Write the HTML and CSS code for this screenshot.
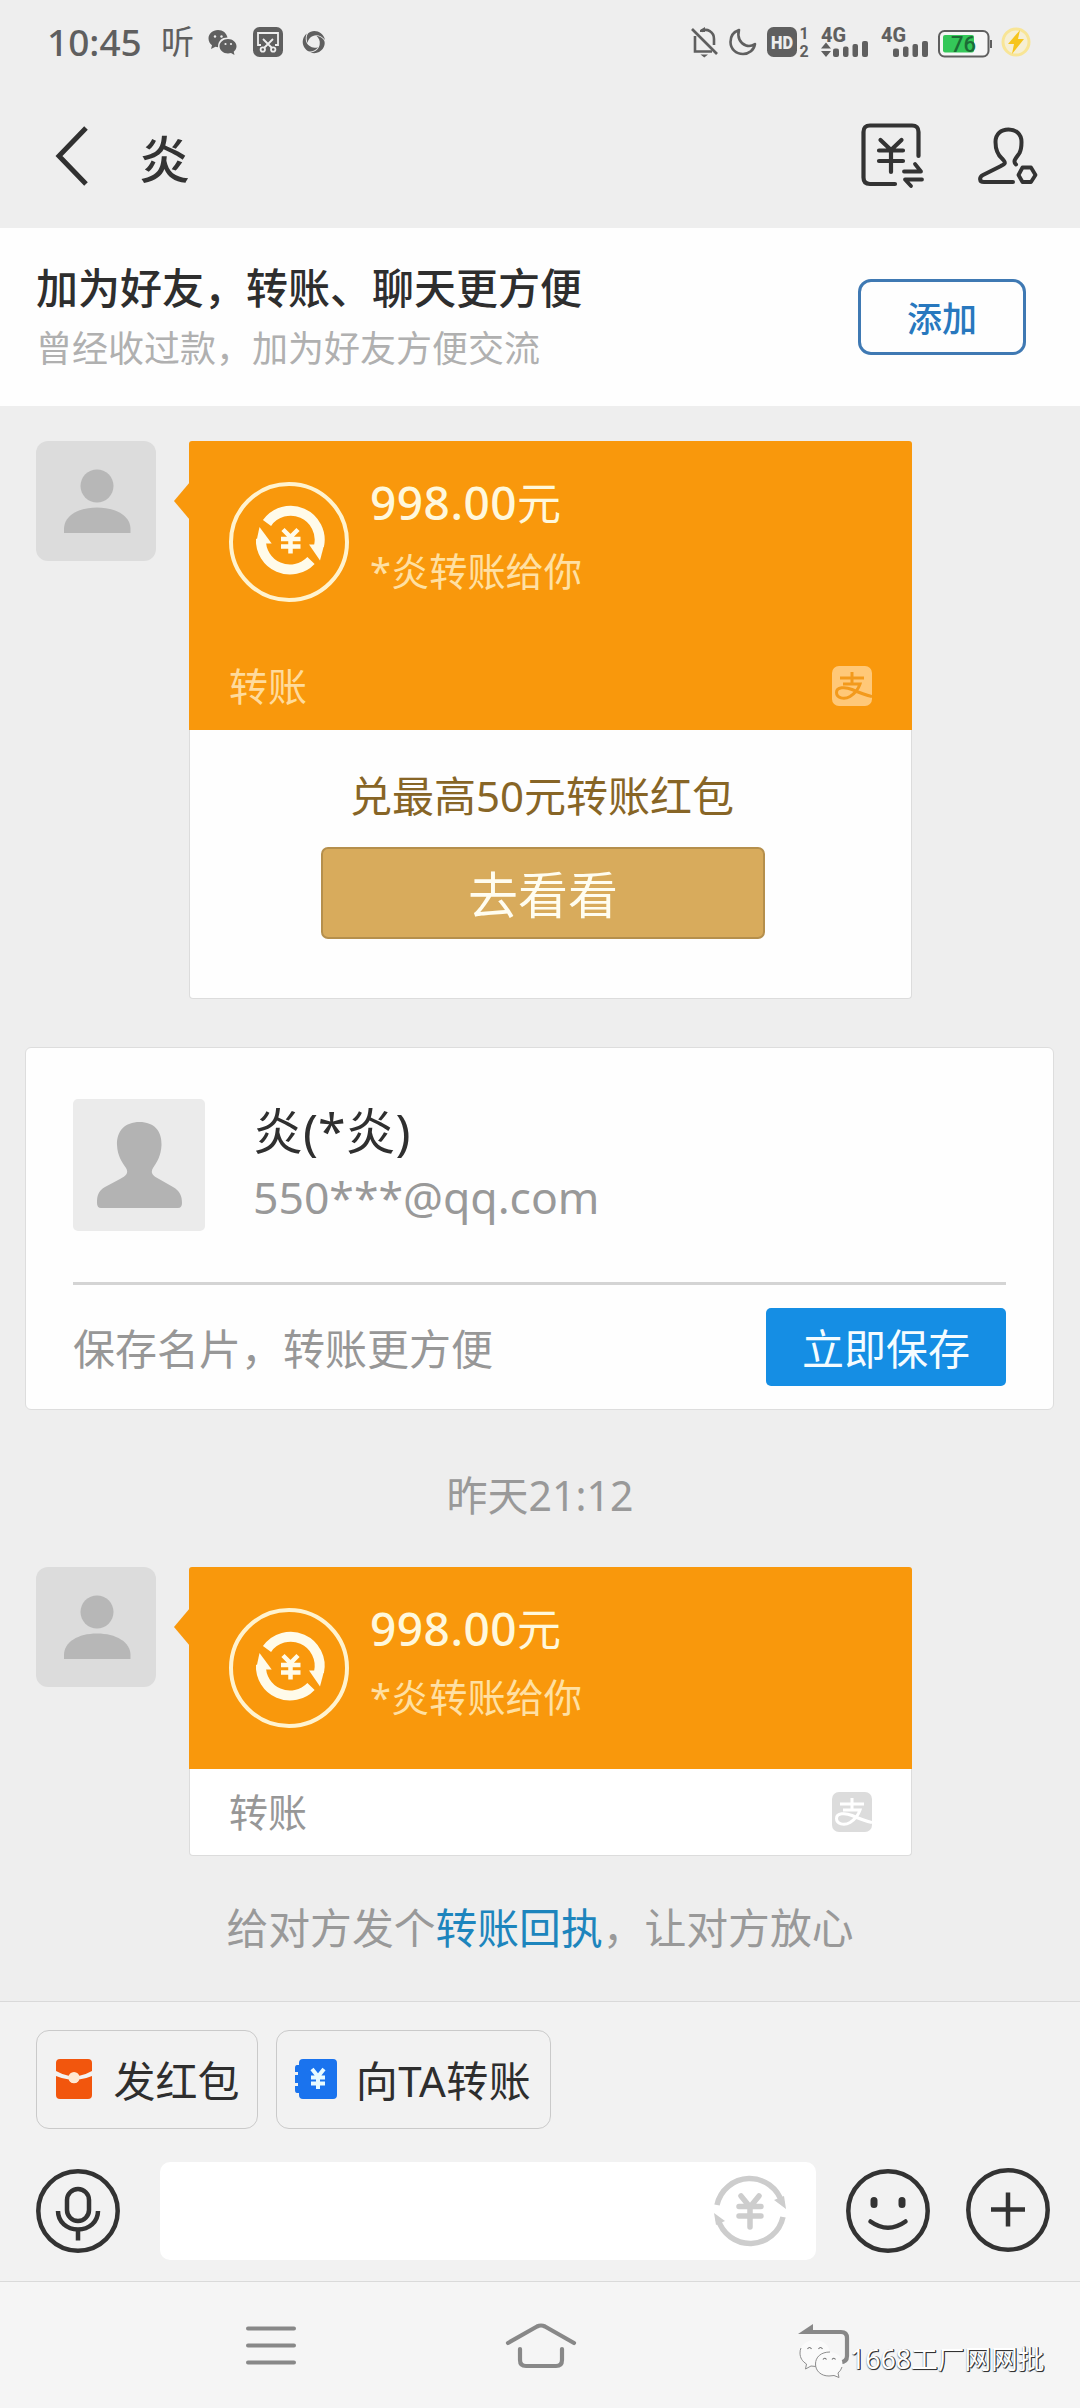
FILE: index.html
```html
<!DOCTYPE html>
<html lang="zh-CN">
<head>
<meta charset="utf-8">
<title>炎</title>
<link rel="stylesheet" href="styles.css">
</head>
<body>
<svg class="defs" width="0" height="0">
  <defs>
    <symbol id="person" viewBox="0 0 120 120">
      <circle cx="61" cy="45" r="16.5"/>
      <path d="M28 92V88C28 75 42 66.500 61 66.500S94.500 75 94.500 88V92Z"/>
    </symbol>
    <symbol id="transfer" viewBox="0 0 120 120">
      <circle cx="60" cy="60" r="58" fill="none" stroke="#fff3cf" stroke-width="4"/>
      <g fill="none" stroke="#fffbea" stroke-width="10">
        <path d="M38 41A29 29 0 0 1 90 64"/>
        <path d="M82 78.500A29 29 0 0 1 32 57"/>
      </g>
      <g fill="#fffbea">
        <path d="M80 62.500H95.200L91 78.500Z"/>
        <path d="M42.700 61.500H27L30.500 45Z"/>
      </g>
      <path d="M54 47.500L61.500 55L69 47.500M61.500 54V71.500M52 57H71.500M52 64.500H71.500" fill="none" stroke="#fffbea" stroke-width="4.500"/>
    </symbol>
    <symbol id="pay" viewBox="0 0 40 40">
      <path d="M8 12H32M20 6V18M11 18H28C26 24 22 28 18 30.500C12 34 4.500 32 4.500 26.500C4.500 21 13 20.500 20 23.500C28 27 33 29 40 30.500" fill="none" stroke-width="3"/>
    </symbol>
  </defs>
</svg>
<main class="phone">
  <div class="status">
    <span class="clock">10:45</span>
    <span class="ting">听</span>
    <svg class="s-wechat" width="29" height="26" viewBox="0 0 29 26">
      <path fill="#5f5f5f" d="M10 0C4.500 0 .5 3.700.5 8.500C.5 11.500 2 13.700 4 15.200L3 19L7.500 16.800L10 17.200C10 10.500 14 7.500 19.500 7.500C18.500 3 15 0 10 0Z"/>
      <path fill="#5f5f5f" d="M20 9C15.300 9 11.500 12.300 11.500 16.300S15.300 23.500 20 23.500L23 23L26.500 25L25.700 21.700C27.500 20.500 28.500 18.500 28.500 16.300C28.500 12.300 24.700 9 20 9Z"/>
      <g fill="#eee"><circle cx="7" cy="6.500" r="1.200"/><circle cx="13.500" cy="6.500" r="1.200"/><circle cx="17.500" cy="14" r="1.100"/><circle cx="23" cy="14" r="1.100"/></g>
    </svg>
    <svg class="s-cut" width="30" height="30" viewBox="0 0 30 30">
      <rect width="30" height="30" rx="6.500" fill="#5f5f5f"/>
      <g fill="none" stroke="#eee" stroke-width="1.800"><path d="M8 18H5V6H25V18H22"/><path d="M10 12L19 21M20 12L11 21"/><circle cx="9.800" cy="22.500" r="2.200"/><circle cx="20.200" cy="22.500" r="2.200"/></g>
    </svg>
    <svg class="s-swirl" width="24" height="24" viewBox="-12 -12 24 24">
      <g fill="#5f5f5f"><path id="blade" d="M-6 -8.500C-2 -13 9 -12 11 -2C8 -6 3 -8 -1 -6C-4 -5 -6 -2 -6.500 1C-8 -3 -7.500 -6.500 -6 -8.500Z"/><use href="#blade" transform="rotate(120)"/><use href="#blade" transform="rotate(240)"/></g>
    </svg>
    <span class="spacer"></span>
    <svg class="s-bell" width="28" height="31" viewBox="0 0 28 31">
      <g fill="none" stroke="#5f5f5f" stroke-width="2.600"><path d="M1 2L26 27"/><path d="M4 9V24.500H21"/><path d="M10.500 4C16 1 23 4.500 23 12V18"/></g>
      <path fill="#5f5f5f" d="M9.500 27.500H17L13.300 30.500ZM9 3L14 0V5H9Z"/>
    </svg>
    <svg class="s-moon" width="28" height="28" viewBox="0 0 28 28"><path d="M10 2C4 4 1.500 9 1.500 14C1.500 21 7 26 14 26C20 26 25 22 26 16C23 18 20 18.500 17 17.500C11 15.500 8 9 10 2Z" fill="none" stroke="#5f5f5f" stroke-width="2.600" stroke-linejoin="round"/></svg>
    <svg class="s-hd" width="43" height="31" viewBox="0 0 43 31">
      <rect width="30" height="30" rx="6.500" fill="#5f5f5f"/>
      <text x="4" y="21.500" class="t-hd" textLength="22" lengthAdjust="spacingAndGlyphs">HD</text>
      <text x="37" y="12" text-anchor="middle" class="t-sim">1</text><text x="37" y="29.500" text-anchor="middle" class="t-sim">2</text>
    </svg>
    <svg class="s-sig" width="48" height="31" viewBox="0 0 48 31">
      <text x="0" y="15" class="t-4g" textLength="25" lengthAdjust="spacingAndGlyphs">4G</text>
      <path fill="#5f5f5f" d="M0 21.500L5 15.500L10 21.500ZM0 24L5 30L10 24Z"/>
      <g fill="#5f5f5f"><rect x="12" y="21.500" width="6" height="8.500" rx="2"/><rect x="22" y="19.500" width="5.500" height="10.500" rx="2"/><rect x="31.500" y="17" width="5.500" height="13" rx="2"/><rect x="41" y="14" width="6" height="16" rx="2"/></g>
    </svg>
    <svg class="s-sig" width="48" height="31" viewBox="0 0 48 31">
      <text x="0" y="15" class="t-4g" textLength="25" lengthAdjust="spacingAndGlyphs">4G</text>
      <g fill="#5f5f5f"><rect x="12" y="21.500" width="6" height="8.500" rx="2"/><rect x="22" y="19.500" width="5.500" height="10.500" rx="2"/><rect x="31.500" y="17" width="5.500" height="13" rx="2"/><rect x="41" y="14" width="6" height="16" rx="2"/></g>
    </svg>
    <svg class="s-bat" width="55" height="28" viewBox="0 0 55 28">
      <rect x="1" y="1" width="49.500" height="25.500" rx="5.500" fill="#f6f6f6" stroke="#5f5f5f" stroke-width="2"/>
      <rect x="5" y="5" width="31" height="17.500" rx="2" fill="#34c759"/><path d="M53 10V18" stroke="#5f5f5f" stroke-width="2"/>
      <text x="25.500" y="21.500" text-anchor="middle" class="t-bat">76</text>
    </svg>
    <svg class="s-bolt" width="32" height="32" viewBox="0 0 32 32">
      <circle cx="16" cy="16" r="13" fill="#f6efd4" stroke="#f8e596" stroke-width="3"/><path d="M20 4L8 18H14L12 28L24 13H18Z" fill="#f6c51c"/>
    </svg>
  </div>

  <header class="titlebar">
    <svg width="36" height="60" viewBox="0 0 36 60"><path d="M32 2L5 30L32 58" fill="none" stroke="#303030" stroke-width="5"/></svg>
    <h1 class="title">炎</h1>
    <svg class="bill" width="64" height="66" viewBox="0 0 64 66">
      <g fill="none" stroke="#333" stroke-width="4.200" stroke-linecap="round" stroke-linejoin="round"><path d="M57.500 33V9Q57.500 2.500 51 2.500H9Q2.500 2.500 2.500 9V54.500Q2.500 61 9 61H34"/><path d="M19.500 17L30 27L40.500 17M30 27V49M18 27.500H42M18 38H42"/><path d="M43 48.500H60L54 41M61 56.500H44L50 63" stroke-width="3.800"/></g>
    </svg>
    <svg class="contact" width="60" height="58" viewBox="0 0 60 58">
      <g fill="none" stroke="#333" stroke-width="4" stroke-linecap="round" stroke-linejoin="round"><path d="M38 37.500C34 34 39 30 41.500 26C43 23 43.500 20 43.500 15C43.500 7 38 2.500 30.500 2.500S17.500 7 17.500 15C17.500 23 20 28 24 31.500C29 36.500 27 37 21 40L5 48C1 50 1 55 6 55H35"/><path d="M44.500 40.500H53L57.500 48L53 55H44.500L40.500 48Z" stroke-width="3.800"/></g>
    </svg>
  </header>

  <section class="addfriend">
    <div class="af-text">
      <p class="af-title">加为好友，转账、聊天更方便</p>
      <p class="af-sub">曾经收过款，加为好友方便交流</p>
    </div>
    <button class="af-btn">添加</button>
  </section>

  <section class="chat">
    <div class="msg">
      <div class="avatar"><svg width="120" height="120"><use href="#person"/></svg></div>
      <div class="bubble">
        <div class="orange tall">
          <div class="payment">
            <svg width="120" height="120"><use href="#transfer"/></svg>
            <div><p class="amount">998.00<span>元</span></p><p class="desc">*炎转账给你</p></div>
          </div>
          <div class="foot"><span>转账</span><svg class="pay" width="40" height="40"><use href="#pay"/></svg></div>
        </div>
        <div class="promo">
          <p>兑最高50元转账红包</p>
          <button>去看看</button>
        </div>
      </div>
    </div>

    <article class="card">
      <div class="card-top">
        <svg width="132" height="132" viewBox="0 0 132 132"><rect width="132" height="132" rx="5" fill="#ebebeb"/><path fill="#b3b3b3" d="M66.500 23C52 23 43.500 32 44 46C44.500 57 49 63 53 69C56 74 53 77 47 80L32 88C25 92 24 97 24 104Q24 109 28 109H105Q109 109 109 104C109 97 107 92 100 88L86 80C80 77 77 74 80 69C84 63 88 57 88.500 46C89 32 81 23 66.500 23Z"/></svg>
        <div class="who"><p class="name">炎(*炎)</p><p class="mail">550***@qq.com</p></div>
      </div>
      <div class="card-bottom"><span>保存名片，转账更方便</span><button>立即保存</button></div>
    </article>

    <p class="time">昨天21:12</p>

    <div class="msg">
      <div class="avatar"><svg width="120" height="120"><use href="#person"/></svg></div>
      <div class="bubble">
        <div class="orange">
          <div class="payment">
            <svg width="120" height="120"><use href="#transfer"/></svg>
            <div><p class="amount">998.00<span>元</span></p><p class="desc">*炎转账给你</p></div>
          </div>
        </div>
        <div class="foot plain"><span>转账</span><svg class="pay" width="40" height="40"><use href="#pay"/></svg></div>
      </div>
    </div>
    <p class="hint">给对方发个<a>转账回执</a>，让对方放心</p>
  </section>

  <footer class="composer">
    <div class="chips">
      <button class="chip red">
        <svg width="36" height="40" viewBox="0 0 36 40"><path fill="#f2560d" d="M4 0H32Q36 0 36 4V12Q29 16 22.500 17A5 5 0 0 0 13.500 17Q7 16 0 12V4Q0 0 4 0ZM0 17Q7 20 13 20.500A5.200 5.200 0 0 0 23 20.500Q29 20 36 17V36Q36 40 32 40H4Q0 40 0 36Z"/><circle cx="18" cy="18.500" r="5.500" fill="#ffe9d2"/></svg>
        <span>发红包</span>
      </button>
      <button class="chip blue">
        <svg width="42" height="40" viewBox="0 0 42 40"><path fill="#1a73ee" d="M8 0H38Q42 0 42 4V36Q42 40 38 40H8Q4 40 4 36V34H2Q0 34 0 31V27H3V24H0V16H3V13H0V9Q0 6 2 6H4V4Q4 0 8 0Z"/><path d="M17 10L23 17.500L29 10M23 17V30M16 18.500H30M16 24.500H30" fill="none" stroke="#e8fbff" stroke-width="4"/></svg>
        <span>向TA转账</span>
      </button>
    </div>
    <div class="inputs">
      <svg width="84" height="84" viewBox="0 0 84 84"><g fill="none" stroke="#333" stroke-width="4.500"><circle cx="42" cy="42" r="39.700"/><rect x="31" y="20" width="22" height="32" rx="11"/><path d="M22 42C22 53 31 60.500 42 60.500S62 53 62 42M42 60.500V71.500"/></g></svg>
      <div class="field">
        <svg width="72" height="72" viewBox="0 0 72 72"><g fill="none" stroke="#cdcdcd" stroke-width="5.500"><path d="M3 30A33.500 33.500 0 0 1 68 28"/><path d="M69 42A33.500 33.500 0 0 1 4 44"/><path d="M27 21L36 32L45 21M36 32V52M25 31.500H47M25 41H47" stroke-linecap="round"/></g><path fill="#cdcdcd" d="M60 25L70 21L72 34ZM0 38L11 46L2 50Z"/></svg>
      </div>
      <svg class="smile" width="84" height="84" viewBox="0 0 84 84"><g fill="none" stroke="#333" stroke-width="4.500"><circle cx="42" cy="42" r="39.700"/><path d="M24.500 52.500Q42 65 59.500 52.500" stroke-linecap="round"/><path d="M28 31.500V35.500M56 31.500V35.500" stroke-width="7" stroke-linecap="round"/></g></svg>
      <svg class="plus" width="84" height="84" viewBox="0 0 84 84"><g fill="none" stroke="#333" stroke-width="4.500"><circle cx="42" cy="42" r="39.700"/><path d="M25 41.500H59M42 24.500V58.500"/></g></svg>
    </div>
  </footer>

  <nav class="sysnav">
    <svg class="n-menu" width="50" height="44" viewBox="0 0 50 44"><path d="M2 5.500H48M2 22.500H48M2 39.500H48" stroke="#888" stroke-width="4" stroke-linecap="round"/></svg>
    <svg class="n-home" width="72" height="46" viewBox="0 0 72 46"><g fill="none" stroke="#888" stroke-width="4.200" stroke-linecap="round" stroke-linejoin="round"><path d="M3 20L32 3.500Q36 1.500 40 3.500L69 20"/><path d="M15 26V37Q15 43 21 43H51Q57 43 57 37V26"/></g></svg>
    <svg class="n-back" width="52" height="42" viewBox="0 0 52 42"><path d="M6 8H43Q49 8 49 14V32Q49 38 42 38.500" fill="none" stroke="#888" stroke-width="4.200"/><path d="M0 10L15 0V10Z" fill="#888"/></svg>
    <div class="mark">
      <svg width="44" height="40" viewBox="0 0 44 40">
        <path d="M16 1C7.500 1 1 6.500 1 14C1 19 3.500 22.500 7.500 25L6.500 30L12 27L18 27.500C27 27 31.500 21 31 14C30.500 6.500 24.500 1 16 1Z" fill="#fafafa"/>
        <path d="M2 9Q1 11 1 14C1 19 3.500 22.500 7.500 25L6.500 30L12 27L17 27.500" fill="none" stroke="#8d8d8d"/>
        <path d="M30 13C22 13 16.500 18 16.500 25S22 37 30 37L35 36.500L40 38.500L39 34C42 31.500 43.500 28.500 43.500 25C43.500 18 38 13 30 13Z" fill="#fafafa"/>
        <path d="M31 13C22 13 16.500 18 16.500 25S22 37 30 37L35 36.500L40 38.500L39 34Q42 31.500 43 28" fill="none" stroke="#8d8d8d"/>
        <g fill="none" stroke="#777" stroke-width="1.200"><path d="M8.500 10Q10.500 7 12.500 10M19.500 10Q21.500 7 23.500 10M24 20.500Q25.500 18 27.500 20.500M33 20.500Q35 18 36.500 20.500"/></g>
      </svg>
      <span>1668工厂网网批</span>
    </div>
  </nav>
</main>
</body>
</html>
```
FILE: styles.css
```css
* { box-sizing: border-box; margin: 0; padding: 0; }
body { background: #eee; font-family: "Noto Sans", "Noto Sans CJK SC", sans-serif; color: #333; }
svg { display: block; flex: none; overflow: visible; }
button { font: inherit; border: 0; background: none; display: flex; align-items: center; justify-content: center; }
p, span { white-space: nowrap; }
.defs { position: absolute; }
.phone { width: 1080px; height: 2408px; display: flex; flex-direction: column; overflow: hidden; background: #eee; }

.status { height: 80px; padding: 26px 46px 0 47px; display: flex; align-items: flex-start; color: #5f5f5f; }
.clock { font-size: 37px; line-height: 32px; width: 114px; font-weight: 500; }
.ting { font-size: 33px; line-height: 32px; width: 47px; font-weight: 400; }
.s-wechat { margin: 4px 16px 0 0; }
.s-cut { margin: 1px 19px 0 0; }
.s-swirl { margin-top: 4px; }
.spacer { flex: 1; }
.s-bell { margin: 1px 10px 0 0; }
.s-moon { margin: 2px 10px 0 0; }
.s-hd { margin: 1px 11px 0 0; }
.s-sig { margin: 1px 12px 0 0; }
.s-bat { margin: 4px 7px 0 -3px; }
.s-bolt { margin-right: 2px; }
.t-hd { font: 900 18px Roboto, sans-serif; fill: #eee; }
.t-sim { font: 700 16px Roboto, sans-serif; fill: #5f5f5f; }
.t-4g { font: 800 21px Roboto, sans-serif; fill: #5f5f5f; }
.t-bat { font: 500 22px Roboto, sans-serif; fill: #1c6b35; }

.titlebar { height: 148px; padding: 4px 40px 0 54px; display: flex; align-items: center; }
.title { flex: 1; margin: 5px 0 0 49px; font-size: 51px; line-height: 60px; font-weight: 500; color: #333; }
.bill { margin-right: 53px; }
.contact { margin-right: 2px; }

.addfriend { height: 178px; padding: 0 54px 0 36px; display: flex; justify-content: space-between; background: #fefefe; }
.af-text { padding-top: 34px; }
.af-title { font-size: 42px; line-height: 52px; font-weight: 500; color: #2e2e2e; }
.af-sub { margin-top: 11px; font-size: 36px; line-height: 48px; color: #b0b0b0; }
.af-btn { width: 168px; height: 76px; margin-top: 51px; padding-bottom: 2px; border: 3px solid #3f79b3; border-radius: 13px; font-size: 35px; font-weight: 500; color: #2878be; }

.chat { height: 1595px; padding-top: 35px; }
.msg { display: flex; gap: 33px; padding-left: 36px; }
.avatar { width: 120px; height: 120px; border-radius: 12px; background: #dcdcdc; fill: #b7b7b7; }
.bubble { position: relative; width: 723px; }
.bubble::before { content: ""; position: absolute; left: -15px; top: 41px; border: 19px solid transparent; border-left: 0; border-right: 16px solid #f9980c; }
.orange { height: 202px; padding: 41px 40px 0; background: #f9980c; border-radius: 3px 3px 0 0; }
.orange.tall { height: 289px; }
.payment { display: flex; gap: 21px; }
.amount { margin-top: -7px; font-size: 46px; line-height: 54px; letter-spacing: 0.5px; font-weight: 500; color: #fff8dc; }
.amount span { font-size: 44px; font-weight: 400; }
.desc { margin-top: 17px; font-size: 38.200px; line-height: 48px; color: #ffe0a3; }
.foot { display: flex; align-items: center; justify-content: space-between; font-size: 39px; color: #ffdb9c; }
.tall .foot { margin-top: 59px; height: 50px; }
.foot span { margin-bottom: 4px; }
.pay { background: #ffc878; stroke: #f39a1c; border-radius: 7px; }
.plain { height: 87px; padding: 0 39px 0; background: #fff; border: 1px solid #dcdcdc; border-top: 0; border-radius: 0 0 4px 4px; color: #979797; }
.plain .pay { background: #dcdcdc; stroke: #fff; }
.promo { height: 269px; padding-top: 40px; display: flex; flex-direction: column; align-items: center; background: #fefefe; border: 1px solid #dcdcdc; border-top: 0; border-radius: 0 0 4px 4px; }
.promo p { margin-right: 17px; font-size: 42px; line-height: 52px; color: #876526; }
.promo button { width: 444px; height: 92px; margin: 25px 15px 0 0; padding-bottom: 2px; border: 2px solid #b58f4c; border-radius: 7px; background: #d8ab5c; color: #fffdf0; font-size: 50px; }

.card { width: 1029px; height: 363px; margin: 48px 0 0 25px; padding: 51px 47px 0; background: #fefefe; border: 1px solid #ddd; border-radius: 6px; }
.card-top { height: 186px; display: flex; gap: 48px; border-bottom: 3px solid #d4d4d4; }
.name { margin-top: 0; font-size: 50px; line-height: 64px; color: #2f2f2f; }
.mail { margin-top: 4px; font-size: 44.500px; line-height: 60px; color: #999; }
.card-bottom { height: 124px; padding-bottom: 1px; display: flex; align-items: center; justify-content: space-between; font-size: 42px; color: #979797; }
.card-bottom button { width: 240px; height: 78px; border-radius: 5px; background: #158ee4; color: #f4fcff; }
.time { margin-top: 55px; font-size: 41px; line-height: 60px; color: #999; text-align: center; }
.time + .msg { margin-top: 42px; }
.hint { margin-top: 42px; font-size: 41.800px; line-height: 60px; color: #999; text-align: center; }
.hint a { color: #1d85bd; }

.composer { height: 280px; padding: 28px 30px 0 36px; background: #f2f2f2; border-top: 1.5px solid #d9d9d9; }
.chips { display: flex; gap: 18px; }
.chip { height: 99px; border: 1.5px solid #cacaca; border-radius: 13px; font-size: 42px; color: #2e2e2e; gap: 21px; padding-bottom: 2px; }
.red { width: 222px; padding-left: 2px; }
.blue { width: 275px; gap: 19px; padding-right: 1px; letter-spacing: 0.4px; }
.inputs { margin-top: 33px; height: 98px; display: flex; align-items: center; }
.field { width: 656px; height: 98px; margin: 0 30px 0 40px; padding: 0 30px; display: flex; align-items: center; justify-content: flex-end; background: #fff; border-radius: 10px; }
.plus { margin: -2px 0 0 36px; }

.sysnav { position: relative; height: 127px; padding: 41px 0 0 246px; display: flex; background: #f5f5f5; border-top: 1.500px solid #dadada; }
.n-home { margin-left: 209px; }
.n-back { margin: 1px 0 0 221px; }
.mark { position: absolute; left: 799px; top: 56px; display: flex; align-items: center; gap: 7px; }
.mark span { font-size: 26.700px; line-height: 42px; color: #fff; text-shadow: 1px 0 0 #333, 1px 1px 0 #333, 0 1px 1px #666; }
```
